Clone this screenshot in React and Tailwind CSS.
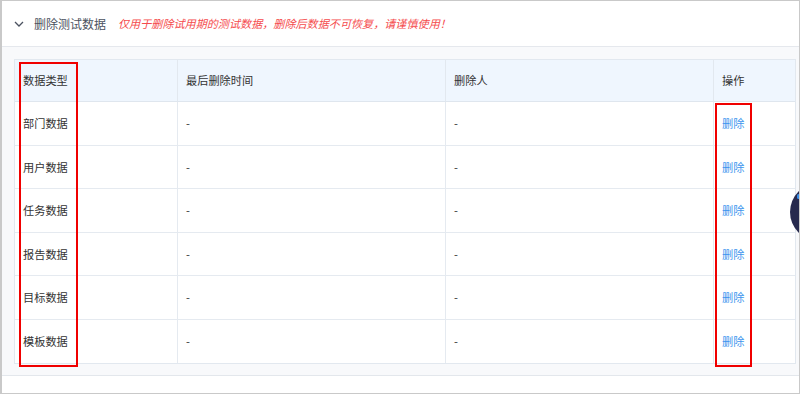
import React from "react";

const rows = ["部门数据", "用户数据", "任务数据", "报告数据", "目标数据", "模板数据"];
const rowH = ["h-[44px]", "h-[43px]", "h-[44px]", "h-[43px]", "h-[44px]", "h-[43px]"];

export default function App() {
  return (
    <div
      className="relative w-[800px] h-[394px] overflow-hidden bg-white border-t border-r border-b border-l-2 border-[#c9c9c9] flex flex-col"
      style={{ fontFamily: '"Noto Sans CJK SC", "Noto Sans", sans-serif' }}
    >
      <div className="h-[46px] shrink-0 flex items-center pl-[12px] border-b border-[#e5e8ed]">
        <svg width="10" height="10" viewBox="0 0 10 10" className="mr-[10px]">
          <path d="M1 3 L5 7 L9 3" fill="none" stroke="#4b5260" strokeWidth="1.3" />
        </svg>
        <span className="text-[12px] text-[#4b5260] leading-none">删除测试数据</span>
        <span className="ml-[12px] text-[11.1px] italic text-[#f54b4d] leading-none">
          仅用于删除试用期的测试数据，删除后数据不可恢复，请谨慎使用！
        </span>
      </div>
      <div className="shrink-0 bg-[#f8f9fb] pt-[12px] pb-[11px] pl-[12px] pr-[3px] border-b border-[#e3e7ec]">
        <div className="border border-[#e2e8ef] bg-white text-[11.2px] text-[#333]">
          <div className="grid grid-cols-[163px_268px_268px_1fr] h-[42px] bg-[#eff6fe] border-b border-[#dfe6ee]">
            <div className="flex items-center pl-[8px] border-r border-[#e2e8ef]">数据类型</div>
            <div className="flex items-center pl-[8px] border-r border-[#e2e8ef]">最后删除时间</div>
            <div className="flex items-center pl-[8px] border-r border-[#e2e8ef]">删除人</div>
            <div className="flex items-center pl-[8px]">操作</div>
          </div>
          {rows.map((r, i) => (
            <div
              key={r}
              className={`grid grid-cols-[163px_268px_268px_1fr] ${rowH[i]} ${i < rows.length - 1 ? "border-b border-[#e5eaf0]" : ""}`}
            >
              <div className="flex items-center pl-[8px] border-r border-[#e5eaf0]">{r}</div>
              <div className="flex items-center pl-[8px] border-r border-[#e5eaf0]">-</div>
              <div className="flex items-center pl-[8px] border-r border-[#e5eaf0]">-</div>
              <div className="flex items-center pl-[8px] text-[#3d95ee]">删除</div>
            </div>
          ))}
        </div>
      </div>
      <div className="flex-1" />

      <div className="absolute left-[17px] top-[61px] w-[59px] h-[305px] border-2 border-[#f00000]" />
      <div className="absolute left-[713px] top-[102px] w-[37px] h-[264px] border-2 border-[#f00000]" />

      <div className="absolute left-[788px] top-[182px] w-[60px] h-[58px] rounded-full bg-[#272a4e]">
        <div className="absolute left-[7px] top-[11px] w-[3px] h-[5px] rounded-sm bg-[#3a8fe8]" />
      </div>
    </div>
  );
}
